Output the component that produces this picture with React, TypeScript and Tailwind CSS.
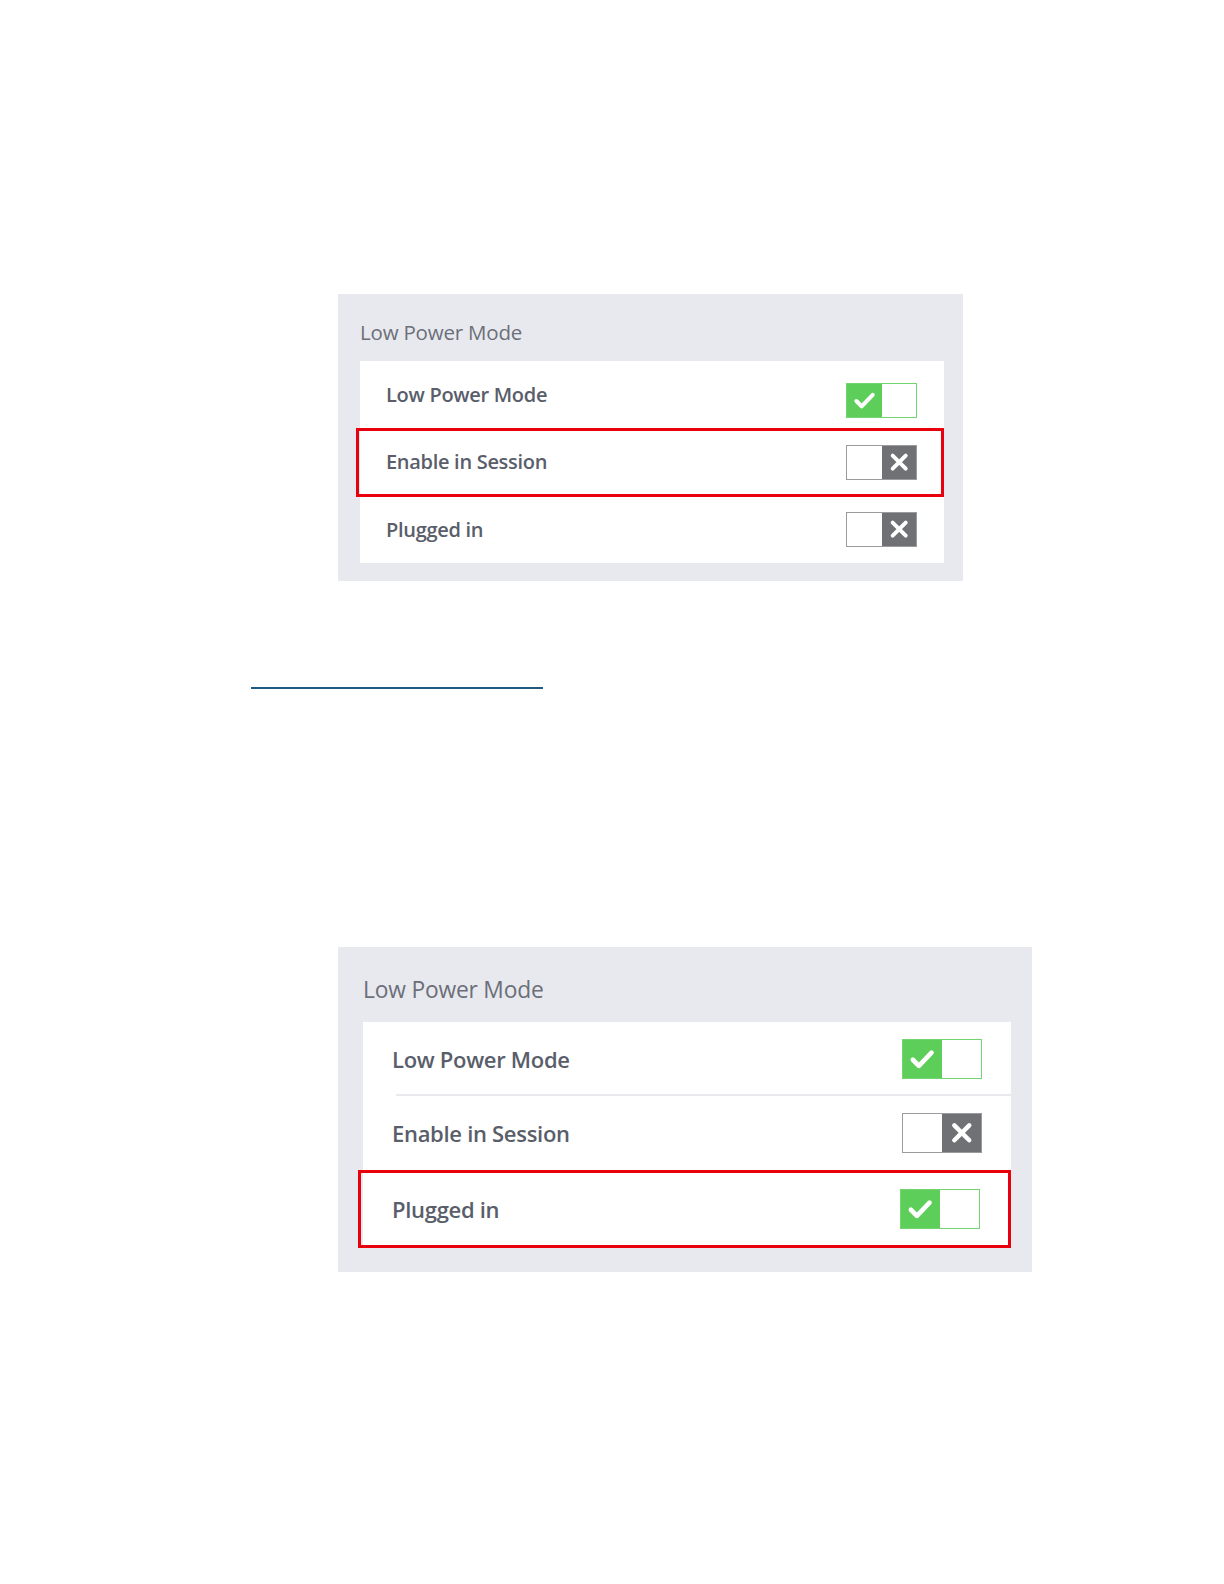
import React from "react";

type ToggleProps = { on: boolean; w: number; h: number };

function Toggle({ on, w, h }: ToggleProps) {
  const half = Math.round(w / 2);
  if (on) {
    return (
      <div
        className="flex shrink-0 border border-[#74d46f] bg-white"
        style={{ width: w, height: h }}
      >
        <div className="flex h-full items-center justify-center bg-[#5ece5a]" style={{ width: half - 1 }}>
          <svg viewBox="0 0 24 24" style={{ width: h * 0.66, height: h * 0.66 }}>
            <path d="M3.5 12.5 L9 18 L20.5 6" fill="none" stroke="#ffffff" strokeWidth="4.2" strokeLinecap="round" strokeLinejoin="round" />
          </svg>
        </div>
        <div className="h-full flex-1 bg-white" />
      </div>
    );
  }
  return (
    <div
      className="flex shrink-0 border border-[#9a9b9e] bg-white"
      style={{ width: w, height: h }}
    >
      <div className="h-full bg-white" style={{ width: half - 1 }} />
      <div className="flex h-full flex-1 items-center justify-center bg-[#6f7175]">
        <svg viewBox="0 0 24 24" style={{ width: h * 0.64, height: h * 0.64 }}>
          <path d="M5 5 L19 19 M19 5 L5 19" fill="none" stroke="#ffffff" strokeWidth="4.2" strokeLinecap="round" />
        </svg>
      </div>
    </div>
  );
}

const font = { fontFamily: '"Open Sans", "Noto Sans", sans-serif' };

export default function App() {
  return (
    <div className="relative min-h-[1584px] w-[1224px] bg-white pt-[294px]" style={font}>
      {/* Panel 1 */}
      <div className="ml-[338px] w-[625px] bg-[#e8e9ef] pb-[18px] pl-[22px] pr-[19px] pt-[24px]">
        <div className="mb-[15px] h-[28px] text-[20.5px] leading-[28px] tracking-[-0.2px] text-[#6b6f78]">Low Power Mode</div>
        <div className="bg-white">
          <div className="flex h-[67px] items-center justify-between pl-[26px] pr-[27px]">
            <span className="text-[20px] font-semibold tracking-[-0.3px] text-[#595e6a]">Low Power Mode</span>
            <div className="mt-[12px]">
              <Toggle on={true} w={71} h={35} />
            </div>
          </div>
          <div className="relative flex h-[68px] items-center justify-between pl-[26px] pr-[27px]">
            <span className="text-[20px] font-semibold tracking-[-0.3px] text-[#595e6a]">Enable in Session</span>
            <Toggle on={false} w={71} h={35} />
            <div className="pointer-events-none absolute -bottom-[1px] -left-[4px] right-0 top-0 border-[3px] border-[#e8000d]" />
          </div>
          <div className="flex h-[67px] items-center justify-between pl-[26px] pr-[27px]">
            <span className="text-[20px] font-semibold tracking-[-0.3px] text-[#595e6a]">Plugged in</span>
            <Toggle on={false} w={71} h={35} />
          </div>
        </div>
      </div>

      {/* Link underline */}
      <div className="ml-[251px] mt-[106px] h-[2px] w-[292px] bg-[#1f5a80]" />

      {/* Panel 2 */}
      <div className="ml-[338px] mt-[258px] w-[694px] bg-[#e8e9ef] pb-[24px] pl-[25px] pr-[21px] pt-[28px]">
        <div className="mb-[17px] h-[30px] text-[22.8px] leading-[30px] tracking-[-0.2px] text-[#6b6f78]">Low Power Mode</div>
        <div className="bg-white">
          <div className="relative flex h-[74px] items-center justify-between pl-[29px] pr-[29px]">
            <span className="text-[22px] font-semibold tracking-[-0.3px] text-[#595e6a]">Low Power Mode</span>
            <Toggle on={true} w={80} h={40} />
            <div className="absolute bottom-0 left-[33px] right-0 h-[2px] bg-[#eaeaee]" />
          </div>
          <div className="flex h-[74px] items-center justify-between pl-[29px] pr-[29px]">
            <span className="text-[22px] font-semibold tracking-[-0.3px] text-[#595e6a]">Enable in Session</span>
            <Toggle on={false} w={80} h={40} />
          </div>
          <div className="relative flex h-[78px] items-center justify-between pl-[29px] pr-[31px]">
            <span className="text-[22px] font-semibold tracking-[-0.3px] text-[#595e6a]">Plugged in</span>
            <Toggle on={true} w={80} h={40} />
            <div className="pointer-events-none absolute -left-[5px] bottom-0 right-0 top-0 border-[3px] border-[#e8000d]" />
          </div>
        </div>
      </div>
    </div>
  );
}
